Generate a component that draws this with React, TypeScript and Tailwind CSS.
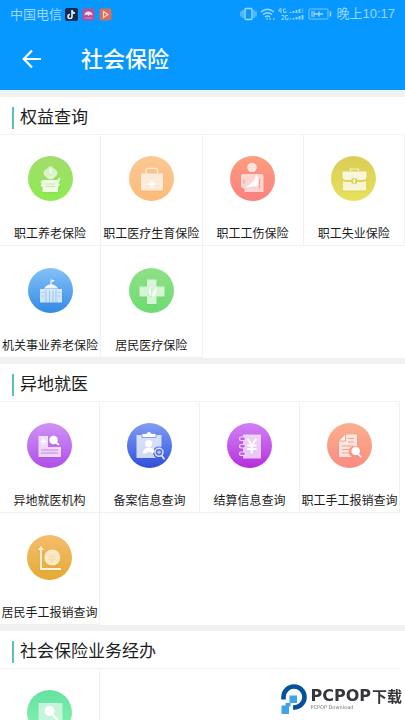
import type { ReactNode } from 'react'
import { clsx } from 'clsx'

type Service = {
	id: string
	label?: string
	tone: string
	icon: ReactNode
}

type ServiceGroup = {
	title: string
	services: Service[]
	narrow?: boolean
}

const groups: ServiceGroup[] = [
	{
		title: '权益查询',
		services: [
			{
				id: 'pension',
				label: '职工养老保险',
				tone: 'from-[#a3dc6c] to-[#8bec4f]',
				icon: (
					<>
						<path d="M15.500 18.500a7 6.500 0 0 1 5-6.500v-1.500h4V12a7 6.500 0 0 1 5 6.500l-3 3h-8z" fillOpacity=".65" />
						<path d="M18.500 20.500h8q0 3-4 3t-4-3z" fillOpacity=".6" />
						<path d="M15 24h14l2.500-2.500 1 1.500-2 4 1.500 2-2 2v5H14.500v-5l-2-1 1-2-1-2.500z" fillOpacity=".85" />
						<path d="M17 28h10M17 30.500h10" stroke="#8fd85c" strokeOpacity=".45" />
						<path d="M22.500 12.500V17" stroke="#fff" strokeWidth="1.500" />
					</>
				),
			},
			{
				id: 'maternity',
				label: '职工医疗生育保险',
				tone: 'from-[#fbc893] to-[#fdbb78]',
				icon: (
					<>
						<path d="M17 17.500v-3q0-2 2-2h7.500q2 0 2 2v3" fill="none" stroke="#fff" strokeOpacity=".6" strokeWidth="1.500" />
						<rect x="12" y="17.500" width="22" height="17" rx="1" fillOpacity=".7" />
						<path d="M21.800 24h2v3h3v2h-3v3h-2v-3h-3v-2h3z" fillOpacity=".8" />
					</>
				),
			},
			{
				id: 'injury',
				label: '职工工伤保险',
				tone: 'from-[#fc9d7d] to-[#fb8180]',
				icon: (
					<>
						<circle cx="22" cy="11.500" r="4.800" fillOpacity=".75" />
						<path d="M11 20q0-2 2-2h18.500q2 0 2 2v16H14.500v-3l-3.500-2z" fillOpacity=".65" />
						<path d="M26 18c0 6-5 10-10.500 13.500L27.500 30c2-4 1.500-8-1.500-12z" />
						<path d="M14 23.500v4M29.500 23v10" stroke="#fb8a7e" strokeOpacity=".7" strokeWidth="1.200" />
					</>
				),
			},
			{
				id: 'unemployment',
				label: '职工失业保险',
				tone: 'from-[#dacd56] to-[#e7e25d]',
				icon: (
					<>
						<path d="M19.500 15v-2h8v2" fill="none" stroke="#fff" strokeOpacity=".7" strokeWidth="1.200" />
						<path d="M11.500 16.500q0-1 1-1h22q1 0 1 1V22q-1 2-4 2H26v-1.500h-5.500V24H15.500q-3 0-4-2z" fillOpacity=".8" />
						<path d="M12 25q2 1 4 1h4.500v1.500H26V26h5q2 0 4-1v9.500H12z" fillOpacity=".75" />
						<ellipse cx="23.300" cy="25" rx="1.600" ry="2.600" fill="#fffbe0" stroke="#d6cb55" />
					</>
				),
			},
			{
				id: 'civil-pension',
				label: '机关事业养老保险',
				tone: 'from-[#83c2f6] to-[#3289e6]',
				icon: (
					<>
						<path d="M23 17v-5.500" stroke="#fff" strokeWidth="1" />
						<path d="M23.500 11.500l3.500 1-3.500 2z" />
						<path d="M16 20.500q1.500-3.500 7-4.500 5.500 1 7 4.500z" fillOpacity=".9" />
						<path d="M12 21h22v13.500H12z" fillOpacity=".75" />
						<path d="M18 22v12M28 22v12M21.500 23v11M25 23v11" stroke="#5ca8ef" strokeOpacity=".5" />
						<path d="M13.500 24.500h3M13.500 28h3M29.500 24.500h3M29.500 28h3" stroke="#5ca8ef" strokeOpacity=".4" />
					</>
				),
			},
			{
				id: 'resident-medical',
				label: '居民医疗保险',
				tone: 'from-[#8fe087] to-[#6bdc70]',
				icon: (
					<>
						<path d="M18 11.500h9.500v7h8v10h-8v7.500H18v-7.500h-7.500v-10H18z" fillOpacity=".7" />
						<path d="M23 29c-5-3-3-8-.5-11-.5 4 0 7 .5 11zM23.500 29c-1-5 2-8 5-10-1.500 4-.5 8-5 10z" fillOpacity=".8" />
						<path d="M18 25c1 2 2.500 3.500 5 4M22.700 20v8" fill="none" stroke="#7cdc7a" strokeOpacity=".4" strokeWidth=".8" />
					</>
				),
			},
		],
	},
	{
		title: '异地就医',
		narrow: true,
		services: [
			{
				id: 'remote-institutions',
				label: '异地就医机构',
				tone: 'from-[#cf92f5] to-[#b04ce9]',
				icon: (
					<>
						<path d="M11.500 13H21v11h13v10H11.500z" fillOpacity=".75" />
						<path d="M15.700 15.500h1.600v2.200h2.200v1.600h-2.200v2.200h-1.600v-2.200h-2.200v-1.600h2.200z" />
						<circle cx="26.500" cy="17" r="4.300" />
						<path d="M29.500 20l2 1.500" stroke="#fff" strokeWidth="1.800" strokeLinecap="round" />
						<path d="M14 27h17M14 30h17" stroke="#c06cec" strokeOpacity=".8" strokeWidth="1.200" />
					</>
				),
			},
			{
				id: 'filing',
				label: '备案信息查询',
				tone: 'from-[#839df2] to-[#2f4ddc]',
				icon: (
					<>
						<path d="M9.500 12H34.500v12a5.500 5.500 0 0 0-5 11H9.500z" fillOpacity=".75" />
						<path d="M15 10.500h4.500q.5-2 2.500-2t2.500 2H29v4H15z" stroke="#708cec" strokeWidth=".8" />
						<circle cx="21.700" cy="20.500" r="3.500" />
						<path d="M15.500 30.500q1-6 6.200-6t6 4l-2 2q-3-3.500-7.200 0z" />
						<circle cx="32" cy="29.300" r="4" fill="#4f6be2" stroke="#dfe6ff" strokeWidth="1.500" />
						<circle cx="32" cy="29.300" r="1.800" fillOpacity=".6" />
						<path d="M35 33l2 2.700" stroke="#dfe6ff" strokeWidth="1.800" strokeLinecap="round" />
					</>
				),
			},
			{
				id: 'settlement',
				label: '结算信息查询',
				tone: 'from-[#d080f6] to-[#b528de]',
				icon: (
					<>
						<path d="M16 11.500h18v24H16z" fillOpacity=".7" />
						<g fill="#c35bea" stroke="#f3ddfc" strokeWidth="1.200">
							<rect x="12.500" y="14" width="6" height="3.500" rx="1.700" />
							<rect x="12.500" y="21.500" width="6" height="3.500" rx="1.700" />
							<rect x="12.500" y="29" width="6" height="3.500" rx="1.700" />
						</g>
						<path d="M20.500 16l4.300 6 4.300-6M20 22.500h9.500M20 26h9.500M24.800 22v8.500" fill="none" stroke="#fff" strokeWidth="2" />
					</>
				),
			},
			{
				id: 'staff-reimburse',
				label: '职工手工报销查询',
				tone: 'from-[#fbb08c] to-[#fa8b82]',
				icon: (
					<>
						<path d="M19 11.500h11v12a5 5 0 0 0-5 10.500H12V18.500h7z" fillOpacity=".75" />
						<path d="M12.500 17.500l5.500-5.500v5.500z" />
						<path d="M21 15.500h6M21 19h6M15 23h11M15 26.500h8M15 30h7" stroke="#fb9c86" strokeWidth="1.200" />
						<circle cx="28.700" cy="28" r="4.300" />
						<path d="M31.500 31.500l2.500 2.500" stroke="#fff" strokeWidth="1.500" strokeLinecap="round" />
					</>
				),
			},
			{
				id: 'resident-reimburse',
				label: '居民手工报销查询',
				tone: 'from-[#f5bd6c] to-[#e4aa31]',
				icon: (
					<>
						<path d="M14 12v22h20" fill="none" stroke="#fff3dc" strokeWidth="1.800" />
						<path d="M11 15l3-4 3 4z" fill="#fff3dc" />
						<circle cx="25.300" cy="22.500" r="8" fill="#fff3dc" fillOpacity=".85" />
						<path d="M22 18.500l3.300 3.500 3.300-3.500M21 22h8.600M21 24.700h8.600M25.300 22v5" fill="none" stroke="#f3d9a5" strokeWidth="1" />
					</>
				),
			},
		],
	},
	{
		title: '社会保险业务经办',
		narrow: true,
		services: [
			{
				id: 'handling',
				tone: 'from-[#64e2a0] to-[#86f3b3]',
				icon: (
					<>
						<path d="M11.500 13h24v20h-24z" fillOpacity=".6" />
						<circle cx="22.500" cy="21" r="5" />
						<path d="M26 25l4 4.500" stroke="#fff" strokeWidth="2" strokeLinecap="round" />
					</>
				),
			},
		],
	},
]

function StatusBar() {
	return (
		<div className="flex h-7 items-center justify-between px-[10px] text-[13px] text-[#9dd7ff]">
			<div className="flex items-center">
				<span>中国电信</span>
				<svg className="ml-[3px] h-[13px] w-[47px]" viewBox="0 0 47 13" aria-hidden="true">
					<rect width="13" height="13" rx="2" fill="#132b52" />
					<path d="M7 2v6.500a2 2 0 1 1-2-2M7 2.500q.5 2.500 3 2.700" fill="none" stroke="#dff6ff" strokeWidth="1.600" />
					<rect x="17.500" y=".5" width="12" height="12" rx="2" fill="#b0529a" />
					<path d="M19.500 7.500a4 4 0 0 1 8 0l-2.500-1-1.500 1.500L22 6.500z" fill="#f7d8ec" />
					<path d="M19.500 10h8" stroke="#d983bd" />
					<rect x="34.500" y=".5" width="12" height="12" rx="2" fill="#cf6f5c" />
					<path d="M38.500 3.500l4.500 3-4.500 3z" fill="none" stroke="#f8d9d0" strokeWidth="1.200" />
				</svg>
			</div>
			<div className="flex items-center">
				<svg className="mr-1 h-[14px] w-[92px]" viewBox="0 0 92 14" fill="none" stroke="#9dd7ff" aria-hidden="true">
					<rect x="5" y="1.500" width="7" height="11" rx="1" strokeWidth="1.400" />
					<path d="M3 3v8M14 3v8M1 4.500v5M16 4.500v5" />
					<path d="M21 5q6.500-5.500 13 0M23 7.500q4.500-3.500 9 0M25 10q2.500-2 5 0" strokeWidth="1.400" />
					<path d="M26.500 12h1.500M29.500 12h1.500M33 12h1.500" strokeWidth="1.500" />
					<path d="M40.500 1l-2 3h3M41 1v5M46 2h-2.500v3.500H46V4M41.500 8.500h2.500v2l-2.500 2H44M48 8.500h-2.500v4H48v-2" strokeWidth=".9" />
					<path d="M50.500 5v1M53.500 4v2M56.500 3v3M59.500 2v4M50.500 11.500v1M53.500 11v1.500M56.500 10v2.500M59.500 9v3.500M62.500 8v4.500" strokeWidth="1.800" />
					<path d="M62.500 1V6" strokeOpacity=".4" strokeWidth="1.500" />
					<rect x="69" y="2" width="19" height="10" rx="1" strokeOpacity=".75" />
					<path d="M71 4h4v6h-4z" fill="#5bbcff" stroke="none" />
					<path d="M74 7h9M79 4.500v5" strokeWidth="1.500" />
					<path d="M90.500 4.500v5" strokeWidth="1.500" />
				</svg>
				<span className="font-['Liberation_Sans','Noto_Sans_CJK_SC',sans-serif]">晚上10:17</span>
			</div>
		</div>
	)
}

function ServiceCell({ service }: { service: Service }) {
	return (
		<a
			href="#"
			className="flex h-28 flex-col items-center border-r border-b border-[#f1f1f1] pt-[22px]"
		>
			<span className={clsx('block size-[45px] shrink-0 rounded-full bg-linear-to-b', service.tone)}>
				<svg viewBox="0 0 45 45" className="size-full drop-shadow-xs" fill="#fff" aria-hidden="true">
					{service.icon}
				</svg>
			</span>
			{service.label && (
				<span className="mt-[22px] text-xs leading-5 whitespace-nowrap">{service.label}</span>
			)}
		</a>
	)
}

function GroupSection({ group }: { group: ServiceGroup }) {
	return (
		<section className="border-t-6 border-[#f1f1f1]">
			<div className="flex h-[37px] items-start gap-[6px] pt-[9px] pl-3">
				<span className="mt-px h-[22px] w-[2px] shrink-0 bg-[#5cbfb9]" />
				<h2 className="text-[17px] leading-5">{group.title}</h2>
			</div>
			<div
				className={clsx(
					'grid grid-cols-4 shadow-[inset_0_1px_0_#f4f4f4]',
					group.narrow && 'mr-[5px]'
				)}
			>
				{group.services.map((service) => (
					<ServiceCell key={service.id} service={service} />
				))}
			</div>
		</section>
	)
}

function Watermark() {
	return (
		<div className="fixed right-[3px] bottom-[6px] flex items-center gap-[3px] text-[#35363b]">
			<svg className="h-[30px] w-[26px]" viewBox="0 0 26 30" aria-hidden="true">
				<path d="M2.500 15.500V13A10.500 10.500 0 1 1 13 23.500h-1" fill="none" stroke="#07509a" strokeWidth="4.600" />
				<path d="M8.500 11.500h7.500V19H9.500v3.500H8V30H.5v-8.500h4V19h4z" fill="#3fa4e4" />
			</svg>
			<div className="flex flex-col">
				<div className="flex items-center gap-px font-bold whitespace-nowrap">
					<span className="font-['DejaVu_Sans',sans-serif] text-[16px] leading-4">PCPOP</span>
					<span className="text-[15px] leading-4">下载</span>
				</div>
				<span className="font-['DejaVu_Sans',sans-serif] text-[5px] leading-[6px] text-[#77787c]">PCPOP Download</span>
			</div>
		</div>
	)
}

export default function App() {
	return (
		<div className="flex h-screen flex-col overflow-hidden bg-white font-['Noto_Sans_CJK_SC',sans-serif] text-[#1c1c1c]">
			<header className="shrink-0 border-b border-[#eaf5fd] bg-[#0798ff]">
				<StatusBar />
				<div className="flex h-[62px] items-center pl-[22px] text-white">
					<button type="button" aria-label="返回">
						<svg className="block h-5 w-[19px]" viewBox="0 0 19 20" fill="none" stroke="currentColor" strokeWidth="2.200" aria-hidden="true">
							<path d="M10 1.500L1.800 10l8.200 8.500M2 10h17" />
						</svg>
					</button>
					<h1 className="ml-10 pb-1 text-[22px] leading-8 font-medium">社会保险</h1>
				</div>
			</header>
			<main className="min-h-0 flex-1 overflow-y-auto [scrollbar-width:none]">
				{groups.map((group) => (
					<GroupSection key={group.title} group={group} />
				))}
			</main>
			<Watermark />
		</div>
	)
}
